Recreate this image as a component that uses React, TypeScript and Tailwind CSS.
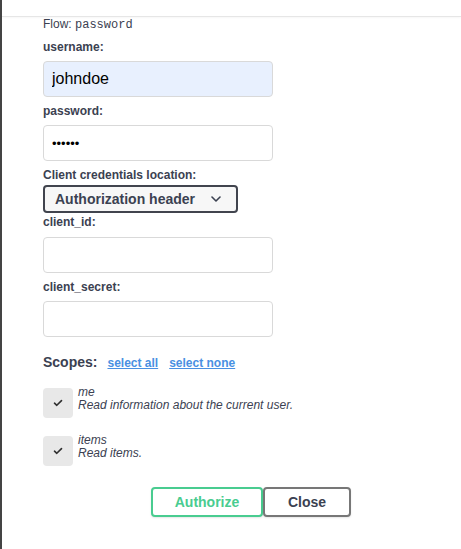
import React from 'react';

type Scope = {
  name: string;
  description: string;
};

const scopes: Scope[] = [
  { name: 'me', description: 'Read information about the current user.' },
  { name: 'items', description: 'Read items.' }
];

const labelClass = 'block text-[12px] font-bold leading-4 text-[#3b4151]';
const inputClass =
  'block h-[36px] w-[230px] rounded-[4px] border border-[#d9d9d9] px-2 text-[16px] text-black outline-none';

function CheckIcon() {
  return (
    <svg width="10" height="8" viewBox="0 0 10 8" fill="none">
      <path d="M1.5 4.2 L3.8 6.3 L8.5 1.6" stroke="#2f2f2f" strokeWidth="1.6" strokeLinecap="round" strokeLinejoin="round" />
    </svg>
  );
}

export default function App() {
  return (
    <div
      className="relative h-[549px] w-[461px] overflow-hidden border-l-2 border-[#444] bg-white text-[#3b4151]"
      style={{ fontFamily: '"Liberation Sans", Arial, sans-serif' }}
    >
      <div className="h-4" />
      <div className="h-px bg-[#e6e6e6] shadow-[0_1px_2px_rgba(0,0,0,0.05)]" />

      <div className="pl-[41px]">
        <p className="text-[12px] leading-[14px] text-[#3b4151]">
          Flow: <code style={{ fontFamily: '"Liberation Mono", monospace' }}>password</code>
        </p>

        <label className={`${labelClass} mt-[7px]`}>username:</label>
        <input readOnly value="johndoe" className={`${inputClass} mt-[6px] bg-[#e8f0fe]`} />

        <label className={`${labelClass} mt-[6px]`}>password:</label>
        <input readOnly type="password" value="secret" className={`${inputClass} mt-[6px] bg-white !text-[13px]`} />

        <label className={`${labelClass} mt-[6px]`}>Client credentials location:</label>
        <div className="mt-[2px] flex h-[28px] w-[195px] items-center justify-between rounded-[4px] border-2 border-[#41444e] bg-[#f7f7f7] pl-[10px] pr-[15px]">
          <span className="text-[14px] font-bold text-[#3b4151]">Authorization header</span>
          <svg width="10" height="6" viewBox="0 0 10 6" fill="none">
            <path d="M1 1 L5 5 L9 1" stroke="#3b4151" strokeWidth="1.6" strokeLinecap="round" strokeLinejoin="round" />
          </svg>
        </div>

        <label className={`${labelClass} mt-[1px]`}>client_id:</label>
        <input readOnly value="" className={`${inputClass} mt-[7px] bg-white`} />

        <label className={`${labelClass} mt-[6px]`}>client_secret:</label>
        <input readOnly value="" className={`${inputClass} mt-[6px] bg-white`} />

        <div className="mt-[17px] flex items-baseline">
          <span className="text-[14px] font-bold leading-4 text-[#3b4151]">Scopes:</span>
          <a className="ml-[10px] cursor-pointer text-[12px] font-bold text-[#4990e2] underline">select all</a>
          <a className="ml-[11px] cursor-pointer text-[12px] font-bold text-[#4990e2] underline">select none</a>
        </div>

        <div className="mt-[14px] flex flex-col gap-4">
          {scopes.map((scope) => (
            <div key={scope.name} className="flex items-start">
              <div className="mt-[2px] flex h-[30px] w-[30px] shrink-0 items-center justify-center rounded-[4px] bg-[#e8e8e8]">
                <CheckIcon />
              </div>
              <div className="ml-[5px] text-[12px] italic leading-[13px] text-[#3b4151]">
                <p>{scope.name}</p>
                <p>{scope.description}</p>
              </div>
            </div>
          ))}
        </div>
      </div>

      <div className="mt-[21px] flex justify-center pl-[39px]">
        <button className="h-[30px] w-[112px] rounded-[4px] border-2 border-[#49cc90] bg-white text-[14px] font-bold text-[#49cc90] shadow-[0_1px_2px_rgba(0,0,0,0.1)]">
          Authorize
        </button>
        <button className="h-[30px] w-[88px] rounded-[4px] border-2 border-[#777] bg-white text-[14px] font-bold text-[#3b4151] shadow-[0_1px_2px_rgba(0,0,0,0.1)]">
          Close
        </button>
      </div>
    </div>
  );
}
